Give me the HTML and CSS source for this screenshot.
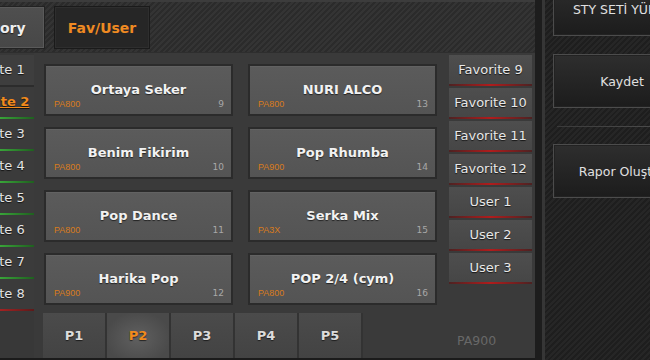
FILE: index.html
```html
<!DOCTYPE html>
<html>
<head>
<meta charset="utf-8">
<link rel="stylesheet" href="styles.css">
</head>
<body>
<div class="app">
  <div class="main">
    <div class="topbar">
      <div class="top-btn top-btn--grey">History</div>
      <div class="top-btn top-btn--active">Fav/User</div>
    </div>
    <div class="panel">
      <div class="leftcol">
        <div class="fav fav--plain">Favorite 1</div>
        <div class="fav fav--sel">Favorite 2</div>
        <div class="fav">Favorite 3</div>
        <div class="fav">Favorite 4</div>
        <div class="fav">Favorite 5</div>
        <div class="fav">Favorite 6</div>
        <div class="fav">Favorite 7</div>
        <div class="fav fav--red">Favorite 8</div>
      </div>
      <div class="center">
        <div class="grid">
          <div class="card"><div class="card-title">Ortaya Seker</div><div class="card-foot"><span class="card-model">PA800</span><span class="card-num">9</span></div></div>
          <div class="card"><div class="card-title">Benim Fikirim</div><div class="card-foot"><span class="card-model">PA800</span><span class="card-num">10</span></div></div>
          <div class="card"><div class="card-title">Pop Dance</div><div class="card-foot"><span class="card-model">PA800</span><span class="card-num">11</span></div></div>
          <div class="card"><div class="card-title">Harika Pop</div><div class="card-foot"><span class="card-model">PA900</span><span class="card-num">12</span></div></div>
          <div class="card"><div class="card-title">NURI ALCO</div><div class="card-foot"><span class="card-model">PA800</span><span class="card-num">13</span></div></div>
          <div class="card"><div class="card-title">Pop Rhumba</div><div class="card-foot"><span class="card-model">PA900</span><span class="card-num">14</span></div></div>
          <div class="card"><div class="card-title">Serka Mix</div><div class="card-foot"><span class="card-model">PA3X</span><span class="card-num">15</span></div></div>
          <div class="card"><div class="card-title">POP 2/4 (cym)</div><div class="card-foot"><span class="card-model">PA800</span><span class="card-num">16</span></div></div>
        </div>
        <div class="pages">
          <div class="page">P1</div>
          <div class="page page--active">P2</div>
          <div class="page">P3</div>
          <div class="page">P4</div>
          <div class="page">P5</div>
        </div>
      </div>
      <div class="rightcol">
        <div class="rfav">Favorite 9</div>
        <div class="rfav">Favorite 10</div>
        <div class="rfav">Favorite 11</div>
        <div class="rfav">Favorite 12</div>
        <div class="rfav">User 1</div>
        <div class="rfav">User 2</div>
        <div class="rfav">User 3</div>
        <div class="model">PA900</div>
      </div>
    </div>
  </div>
  <div class="divider"></div>
  <div class="side">
    <div class="side-btn side-btn--first">STY SETİ YÜKLE</div>
    <div class="side-btn">Kaydet</div>
    <div class="side-sep"></div>
    <div class="side-btn">Rapor Oluştur</div>
  </div>
</div>
</body>
</html>
```

FILE: styles.css
```css
* { box-sizing: border-box; }
html, body {
  margin: 0;
  padding: 0;
  width: 650px;
  height: 360px;
  overflow: hidden;
  background: #222;
  font-family: "DejaVu Sans", Verdana, sans-serif;
}
.app {
  display: flex;
  width: 650px;
  height: 360px;
  overflow: hidden;
}
.main {
  width: 535px;
  flex-shrink: 0;
  display: flex;
  flex-direction: column;
}
.topbar {
  height: 52px;
  display: flex;
  gap: 9px;
  padding-top: 6px;
  border-top: 2px solid #3c3c3c;
  background: repeating-linear-gradient(135deg, #2b2b2b 0 2px, #343434 2px 4px);
}
.top-btn {
  width: 96px;
  height: 43px;
  margin-top: -2px;
  display: flex;
  align-items: center;
  justify-content: center;
  font-weight: bold;
  font-size: 14px;
}
.top-btn--grey {
  margin-left: -51px;
  background: linear-gradient(#4f4f4f, #474747);
  border: 1px solid #222;
  box-shadow: inset 0 0 0 1px #5a5a5a;
  color: #eee;
  text-shadow: 0 1px 1px rgba(0,0,0,.6);
}
.top-btn--active {
  background: #262626;
  border: 1px solid #1a1a1a;
  box-shadow: inset 0 0 0 1px #2e2e2e;
  color: #ef8a22;
}
.panel {
  flex: 1;
  display: flex;
  background: #3a3a3a;
  border-bottom: 2px solid #1b1b1b;
  border-top: 1px solid #2e2e2e;
  overflow: hidden;
}
.leftcol {
  width: 83px;
  margin-left: -49px;
  flex-shrink: 0;
  padding-top: 2px;
  background: #383838;
}
.fav {
  height: 32px;
  line-height: 30px;
  text-align: center;
  font-size: 13px;
  color: #e4e4e4;
  text-shadow: 0 1px 1px rgba(0,0,0,.7);
  border-bottom: 2px solid transparent;
  border-image: linear-gradient(90deg, #1e5e1e, #3fb33f 50%, #1e5e1e) 1;
  background: #3b3b3b;
}
.fav--plain {
  border-image: none;
  border-bottom: 2px solid #2c2c2c;
  background: #3e3e3e;
}
.fav--sel {
  color: #f08a1c;
  font-weight: bold;
  text-decoration: underline;
}
.fav--red {
  border-image: linear-gradient(90deg, #5a1a1a, #b42424 50%, #5a1a1a) 1;
}
.center {
  width: 415px;
  flex-shrink: 0;
  padding: 11px 0 0 10px;
  display: flex;
  flex-direction: column;
}
.grid {
  display: grid;
  grid-template-columns: 189px 189px;
  grid-template-rows: repeat(4, 52px);
  grid-auto-flow: column;
  column-gap: 15px;
  row-gap: 11px;
}
.card {
  display: flex;
  flex-direction: column;
  border: 2px solid #2b2b2b;
  background: linear-gradient(#5b5b5b, #545454);
  box-shadow: inset 0 1px 0 #626262;
}
.card-title {
  flex: 1;
  display: flex;
  align-items: flex-end;
  justify-content: center;
  padding-bottom: 1px;
  font-weight: bold;
  font-size: 13px;
  color: #f2f2f2;
  text-shadow: 0 1px 1px rgba(0,0,0,.6);
}
.card-foot {
  display: flex;
  justify-content: space-between;
  align-items: center;
  height: 14px;
  padding: 0 7px 3px 8px;
  margin-bottom: 2px;
}
.card-model {
  font-family: "Liberation Sans", Arial, sans-serif;
  font-size: 9px;
  color: #d97b1c;
}
.card-num {
  font-size: 9px;
  color: #a8a8a8;
}
.pages {
  display: flex;
  margin-top: 8px;
  margin-left: -1px;
  height: 45px;
}
.page {
  width: 64px;
  display: flex;
  align-items: center;
  justify-content: center;
  font-weight: bold;
  font-size: 13px;
  color: #dcdcdc;
  background: linear-gradient(#4b4b4b, #434343);
  border-right: 2px solid #333;
  text-shadow: 0 1px 1px rgba(0,0,0,.6);
}
.page--active {
  color: #f08a1c;
  background: radial-gradient(ellipse at 50% 55%, #606060, #4a4a4a 75%);
}
.rightcol {
  width: 83px;
  flex-shrink: 0;
  padding-top: 2px;
  display: flex;
  flex-direction: column;
}
.rfav {
  height: 31px;
  margin-bottom: 2px;
  line-height: 29px;
  text-align: center;
  font-size: 13px;
  color: #e8e8e8;
  text-shadow: 0 1px 1px rgba(0,0,0,.7);
  background: linear-gradient(#4e4e4e, #464646);
  border-bottom: 2px solid transparent;
  border-image: linear-gradient(90deg, #4a2222, #b01c1c 50%, #4a2222) 1;
}
.model {
  margin-top: auto;
  margin-bottom: 10px;
  padding-left: 8px;
  text-align: left;
  font-size: 12.5px;
  color: #686868;
}
.divider {
  width: 10px;
  flex-shrink: 0;
  background: #1d1d1d;
  border-right: 3px solid #363636;
}
.side {
  flex: 1;
  min-width: 0;
  padding-left: 8px;
  background: repeating-linear-gradient(135deg, #1e1e1e 0 2px, #262626 2px 4px);
  display: flex;
  flex-direction: column;
}
.side-btn {
  width: 138px;
  height: 54px;
  flex-shrink: 0;
  margin-top: 18px;
  display: flex;
  align-items: center;
  justify-content: center;
  white-space: nowrap;
  font-size: 12.5px;
  color: #e0e0e0;
  border: 1px solid #4c4c4c;
  background: linear-gradient(#2e2e2e, #1c1c1c);
  box-shadow: inset 0 0 0 1px #222;
}
.side-btn--first {
  margin-top: -18px;
}
.side-sep {
  height: 1px;
  margin: 18px 0 0 4px;
  background: linear-gradient(90deg, #3a3a3a, #4a4a4a);
  flex-shrink: 0;
}
.side-sep + .side-btn {
  margin-top: 17px;
}
```
